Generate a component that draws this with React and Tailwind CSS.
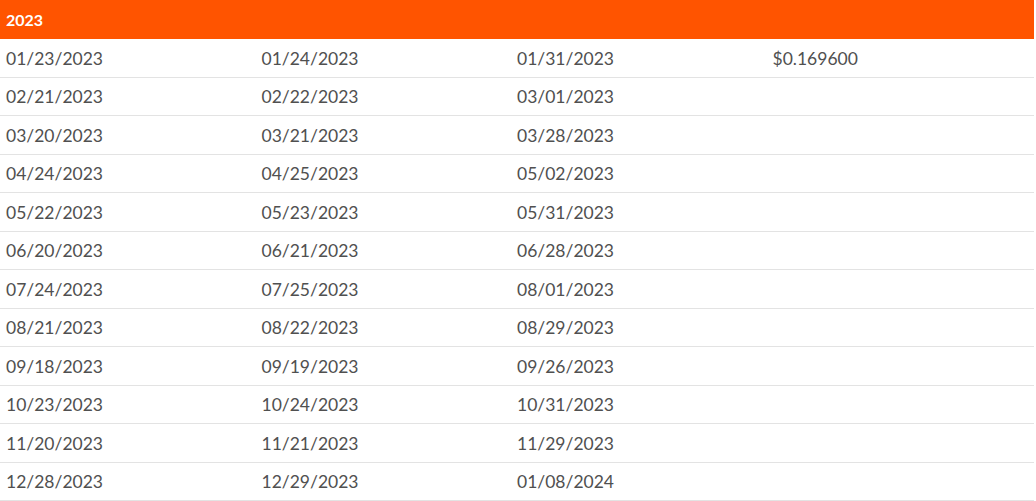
import React from 'react';

const rows = [
  ['01/23/2023', '01/24/2023', '01/31/2023', '$0.169600'],
  ['02/21/2023', '02/22/2023', '03/01/2023', ''],
  ['03/20/2023', '03/21/2023', '03/28/2023', ''],
  ['04/24/2023', '04/25/2023', '05/02/2023', ''],
  ['05/22/2023', '05/23/2023', '05/31/2023', ''],
  ['06/20/2023', '06/21/2023', '06/28/2023', ''],
  ['07/24/2023', '07/25/2023', '08/01/2023', ''],
  ['08/21/2023', '08/22/2023', '08/29/2023', ''],
  ['09/18/2023', '09/19/2023', '09/26/2023', ''],
  ['10/23/2023', '10/24/2023', '10/31/2023', ''],
  ['11/20/2023', '11/21/2023', '11/29/2023', ''],
  ['12/28/2023', '12/29/2023', '01/08/2024', ''],
];

const App = () => {
  return (
    <div className="w-[1034px] bg-white font-['Lato',sans-serif]">
      <div className="h-[39px] bg-[#ff5400] flex items-center px-[6px]">
        <span className="text-white text-[16px] font-bold">2023</span>
      </div>
      {rows.map((row, i) => (
        <div
          key={i}
          className="grid grid-cols-[255.5px_255.5px_255.5px_1fr] h-[38.5px] items-center border-b border-[#e3e3e3] text-[17.5px] text-[#505050]"
        >
          {row.map((cell, j) => (
            <div key={j} className="pl-[6px] pt-[2px]">{cell}</div>
          ))}
        </div>
      ))}
    </div>
  );
};

export default App;
